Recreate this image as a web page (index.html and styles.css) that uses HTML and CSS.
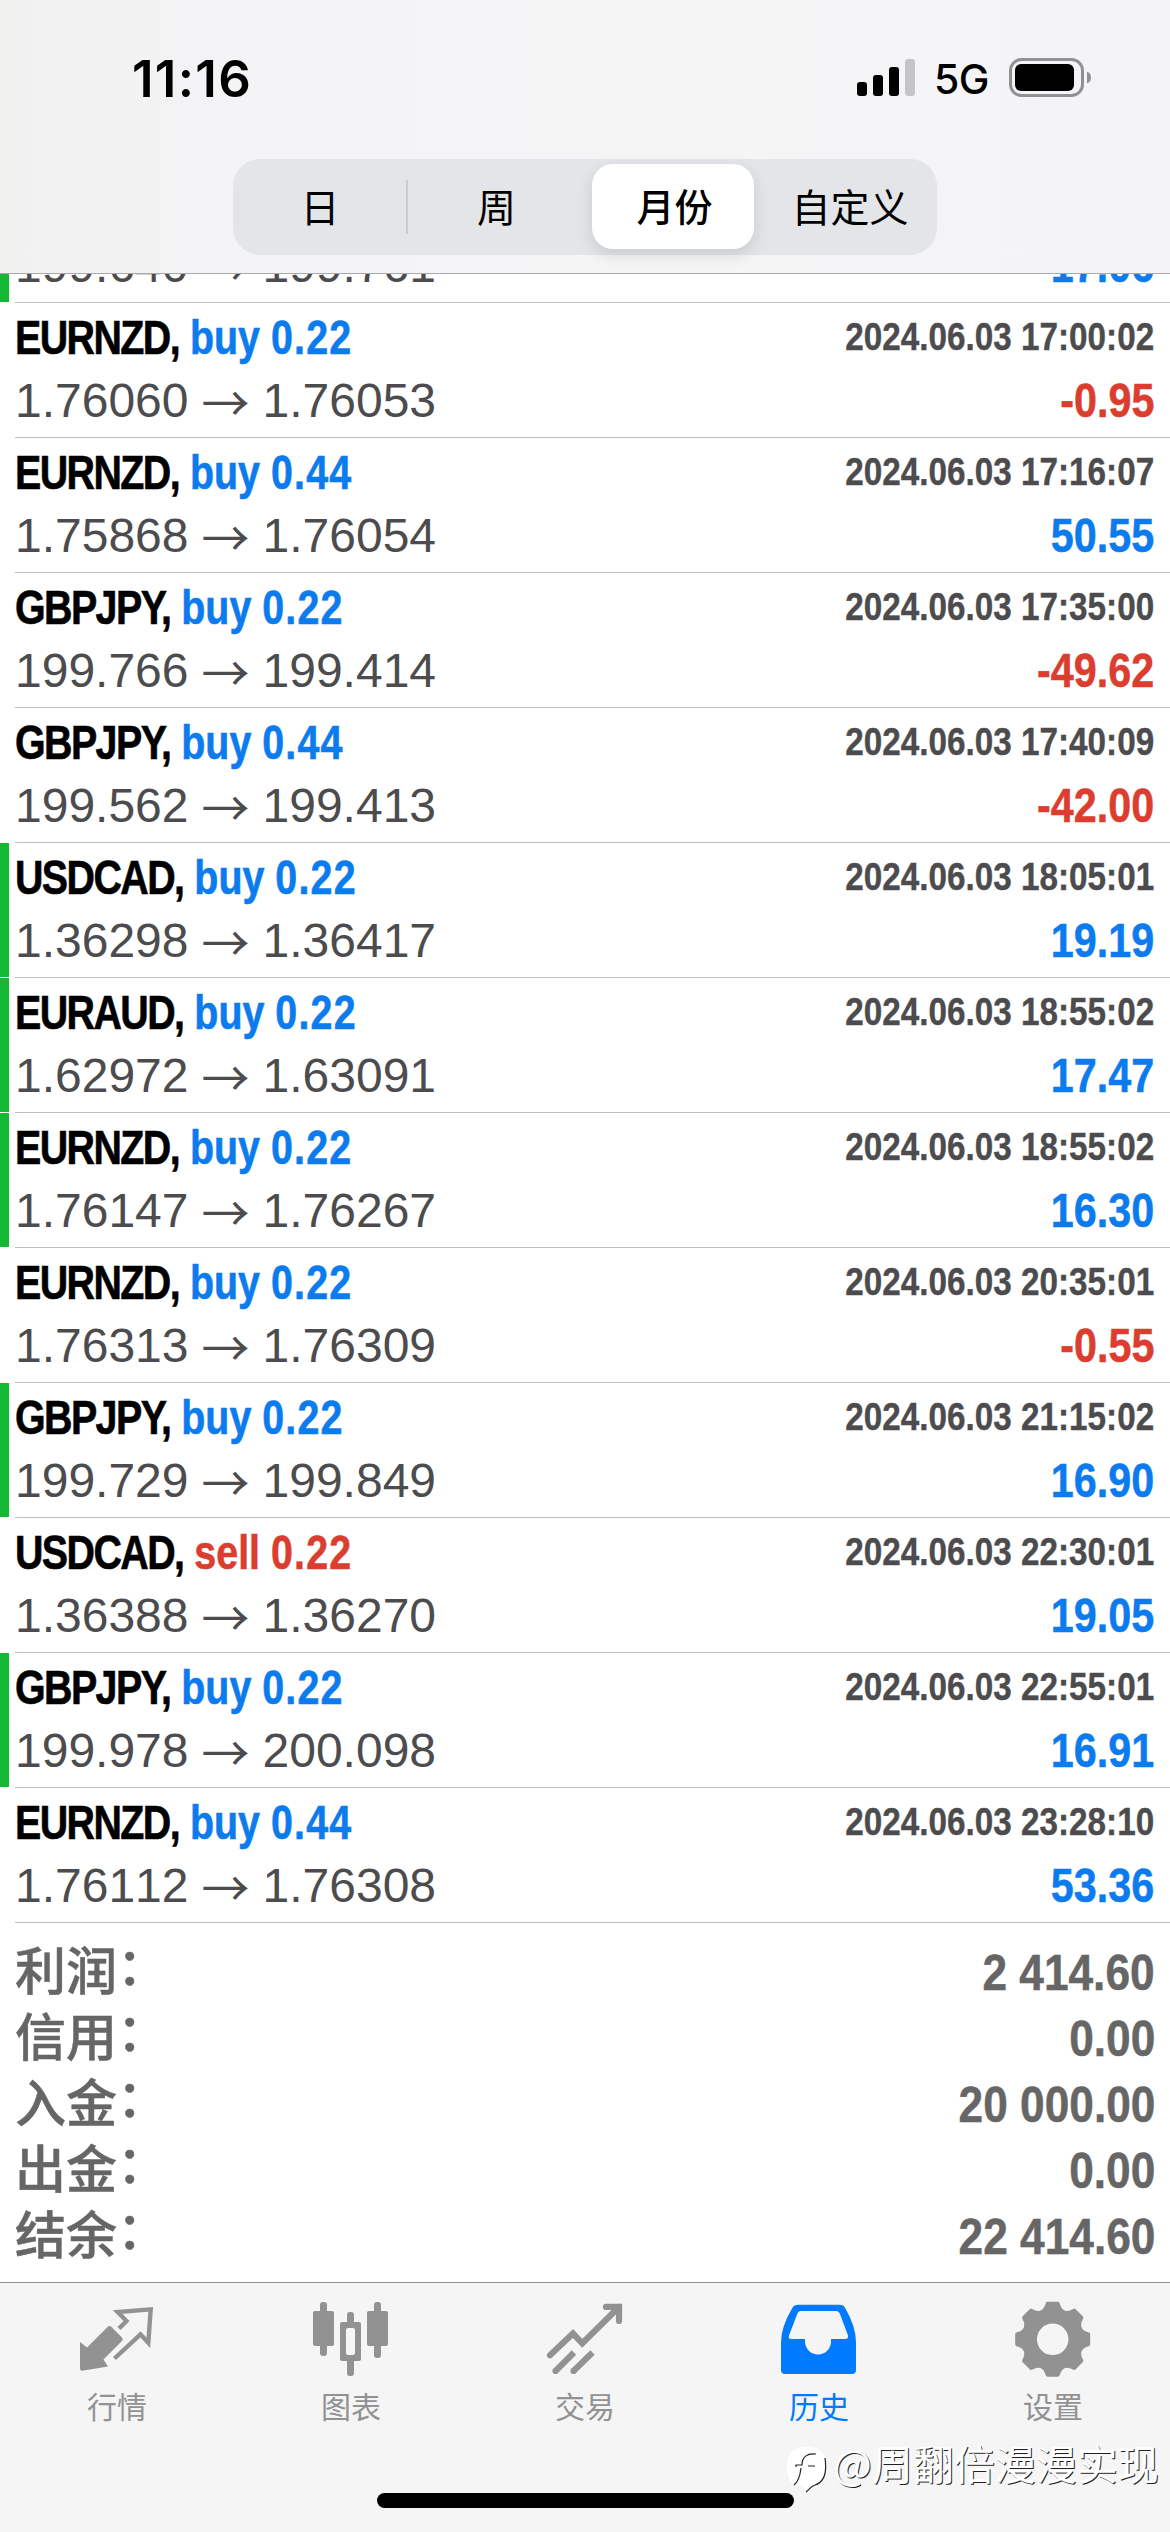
FILE: index.html
```html
<!DOCTYPE html>
<html lang="zh-CN">
<head>
<meta charset="utf-8">
<title>历史</title>
<link rel="stylesheet" href="styles.css">
</head>
<body>
<div class="app">
  <header class="header">
    <div class="status">
      <span class="time">11:16</span>
      <div class="status-right">
        <svg class="signal" width="58" height="38" viewBox="0 0 58 38"><rect x="0" y="23" width="10" height="14" rx="3"/><rect x="16" y="16" width="10" height="21" rx="3"/><rect x="32" y="8" width="10" height="29" rx="3"/><rect x="48" y="0" width="10" height="37" rx="3" fill="#c5c5c7"/></svg>
        <span class="network">5G</span>
        <svg class="battery" width="82" height="40" viewBox="0 0 82 40"><rect x="1.5" y="1.5" width="72" height="36" rx="11" fill="none" stroke="#919193" stroke-width="3"/><rect x="6" y="6" width="59" height="27" rx="6"/><path d="M78 13.5q4 1.500 4 6t-4 6z" fill="#919193"/></svg>
      </div>
    </div>
    <nav class="segmented">
      <span class="segment segment-day">日</span>
      <span class="segment segment-week">周</span>
      <span class="segment segment-active">月份</span>
      <span class="segment segment-custom">自定义</span>
    </nav>
  </header>

  <main class="content">
    <section class="deals">
      <article class="deal deal-tp deal-scrolled"><div class="line line-price"><div class="prices"><span>199.640</span><span class="arrow">→</span><span>199.761</span></div><div class="profit pos">17.06</div></div></article>
      <article class="deal"><div class="line"><div class="title"><span class="symbol">EURNZD,</span> <span class="buy">buy <span class="num">0.22</span></span></div><time class="date">2024.06.03 17:00:02</time></div><div class="line line-price"><div class="prices"><span>1.76060</span><span class="arrow">→</span><span>1.76053</span></div><div class="profit neg">-0.95</div></div></article>
      <article class="deal"><div class="line"><div class="title"><span class="symbol">EURNZD,</span> <span class="buy">buy <span class="num">0.44</span></span></div><time class="date">2024.06.03 17:16:07</time></div><div class="line line-price"><div class="prices"><span>1.75868</span><span class="arrow">→</span><span>1.76054</span></div><div class="profit pos">50.55</div></div></article>
      <article class="deal"><div class="line"><div class="title"><span class="symbol">GBPJPY,</span> <span class="buy">buy <span class="num">0.22</span></span></div><time class="date">2024.06.03 17:35:00</time></div><div class="line line-price"><div class="prices"><span>199.766</span><span class="arrow">→</span><span>199.414</span></div><div class="profit neg">-49.62</div></div></article>
      <article class="deal"><div class="line"><div class="title"><span class="symbol">GBPJPY,</span> <span class="buy">buy <span class="num">0.44</span></span></div><time class="date">2024.06.03 17:40:09</time></div><div class="line line-price"><div class="prices"><span>199.562</span><span class="arrow">→</span><span>199.413</span></div><div class="profit neg">-42.00</div></div></article>
      <article class="deal deal-tp"><div class="line"><div class="title"><span class="symbol">USDCAD,</span> <span class="buy">buy <span class="num">0.22</span></span></div><time class="date">2024.06.03 18:05:01</time></div><div class="line line-price"><div class="prices"><span>1.36298</span><span class="arrow">→</span><span>1.36417</span></div><div class="profit pos">19.19</div></div></article>
      <article class="deal deal-tp"><div class="line"><div class="title"><span class="symbol">EURAUD,</span> <span class="buy">buy <span class="num">0.22</span></span></div><time class="date">2024.06.03 18:55:02</time></div><div class="line line-price"><div class="prices"><span>1.62972</span><span class="arrow">→</span><span>1.63091</span></div><div class="profit pos">17.47</div></div></article>
      <article class="deal deal-tp"><div class="line"><div class="title"><span class="symbol">EURNZD,</span> <span class="buy">buy <span class="num">0.22</span></span></div><time class="date">2024.06.03 18:55:02</time></div><div class="line line-price"><div class="prices"><span>1.76147</span><span class="arrow">→</span><span>1.76267</span></div><div class="profit pos">16.30</div></div></article>
      <article class="deal"><div class="line"><div class="title"><span class="symbol">EURNZD,</span> <span class="buy">buy <span class="num">0.22</span></span></div><time class="date">2024.06.03 20:35:01</time></div><div class="line line-price"><div class="prices"><span>1.76313</span><span class="arrow">→</span><span>1.76309</span></div><div class="profit neg">-0.55</div></div></article>
      <article class="deal deal-tp"><div class="line"><div class="title"><span class="symbol">GBPJPY,</span> <span class="buy">buy <span class="num">0.22</span></span></div><time class="date">2024.06.03 21:15:02</time></div><div class="line line-price"><div class="prices"><span>199.729</span><span class="arrow">→</span><span>199.849</span></div><div class="profit pos">16.90</div></div></article>
      <article class="deal"><div class="line"><div class="title"><span class="symbol">USDCAD,</span> <span class="sell">sell <span class="num">0.22</span></span></div><time class="date">2024.06.03 22:30:01</time></div><div class="line line-price"><div class="prices"><span>1.36388</span><span class="arrow">→</span><span>1.36270</span></div><div class="profit pos">19.05</div></div></article>
      <article class="deal deal-tp"><div class="line"><div class="title"><span class="symbol">GBPJPY,</span> <span class="buy">buy <span class="num">0.22</span></span></div><time class="date">2024.06.03 22:55:01</time></div><div class="line line-price"><div class="prices"><span>199.978</span><span class="arrow">→</span><span>200.098</span></div><div class="profit pos">16.91</div></div></article>
      <article class="deal"><div class="line"><div class="title"><span class="symbol">EURNZD,</span> <span class="buy">buy <span class="num">0.44</span></span></div><time class="date">2024.06.03 23:28:10</time></div><div class="line line-price"><div class="prices"><span>1.76112</span><span class="arrow">→</span><span>1.76308</span></div><div class="profit pos">53.36</div></div></article>
    </section>
    <dl class="summary">
      <div class="total"><dt>利润<span class="colon">：</span></dt><dd>2 414.60</dd></div>
      <div class="total"><dt>信用<span class="colon">：</span></dt><dd>0.00</dd></div>
      <div class="total"><dt>入金<span class="colon">：</span></dt><dd>20 000.00</dd></div>
      <div class="total"><dt>出金<span class="colon">：</span></dt><dd>0.00</dd></div>
      <div class="total"><dt>结余<span class="colon">：</span></dt><dd>22 414.60</dd></div>
    </dl>
  </main>

  <footer class="tabbar">
    <nav class="tabs">
      <a class="tab">
        <svg class="icon" viewBox="0 0 78 78"><path d="M2 42l7 5.500L29.500 27q2-2 4 0l10.200 10.200q2 2 0 4L25.500 59.500l4.500 7L4 70.700q-2 0-2-2z" fill="currentColor"/><path d="M41 28.500l7.500-7.500-8.800-9 33-2.600-2.400 33.400-7.800-8.500L36.500 58.500" fill="none" stroke="currentColor" stroke-width="4.400"/></svg>
        <span>行情</span>
      </a>
      <a class="tab">
        <svg class="icon" viewBox="0 0 78 78" fill="currentColor"><rect x="8" y="2" width="7" height="54" rx="3"/><rect x="1" y="11" width="21" height="35" rx="2"/><rect x="62" y="2" width="7" height="56" rx="3"/><rect x="55" y="11" width="21" height="35" rx="2"/><rect x="35" y="12" width="7" height="64" rx="3"/><rect x="28" y="22" width="21" height="39" rx="2"/><rect x="34" y="28" width="9" height="27" rx="2" fill="#f6f6f6"/></svg>
        <span>图表</span>
      </a>
      <a class="tab">
        <svg class="icon" viewBox="0 0 78 78" fill="none" stroke="currentColor" stroke-width="6.200"><path d="M4 55.300L27 33.500l9.300 9.800L73 7" stroke-linecap="round"/><path d="M60 6.900h13v14" stroke-linecap="round"/><path d="M9.500 71L28 52.500M27.500 71L46.500 52.500"/><g fill="currentColor" stroke="none"><circle cx="9.500" cy="71" r="3.100"/><circle cx="27.500" cy="71" r="3.100"/></g></svg>
        <span>交易</span>
      </a>
      <a class="tab tab-active">
        <svg class="icon" viewBox="0 0 78 78"><path fill-rule="evenodd" fill="currentColor" d="M18 4.700h41.500q4 0 5.700 3.300Q76 27 76 42v28q0 4-4 4H5q-4 0-4-4V42Q1 27 12.300 8 14 4.700 18 4.700zM21 11q-2.500 0-3.500 2.300L9 35.500Q8 39 11 39h14v2.500a13 13 0 0 0 26 0V39h14q3.500 0 3-3.500l-8.300-22.200Q58.500 11 56 11z"/></svg>
        <span>历史</span>
      </a>
      <a class="tab">
        <svg class="icon" viewBox="0 0 78 78"><defs><path id="tooth" d="M-5-35.500H5Q7-28 13-26H-13Q-7-28-5-35.500z" stroke-width="4" stroke-linejoin="round"/></defs><g transform="translate(38.700 39.300)" fill="currentColor" stroke="currentColor"><circle r="23" fill="none" stroke-width="14.500"/><use href="#tooth"/><use href="#tooth" transform="rotate(45)"/><use href="#tooth" transform="rotate(90)"/><use href="#tooth" transform="rotate(135)"/><use href="#tooth" transform="rotate(180)"/><use href="#tooth" transform="rotate(225)"/><use href="#tooth" transform="rotate(270)"/><use href="#tooth" transform="rotate(315)"/></g></svg>
        <span>设置</span>
      </a>
    </nav>
    <div class="home-indicator"></div>
  </footer>

  <div class="watermark">
    <svg class="mark" width="42" height="48" viewBox="0 0 42 48"><path d="M20 1C34 1 40 6 40 21S35 39 27 39L20 46 16 40C5 39 1 33 1 21S6 1 20 1z" fill="#fff"/><path d="M39 12c2 14 0 24-10 27-4 1-5 4-9 7M8 39c4-3 6-8 7-17M10 21v-2h6c0-8 5-12 14-11M22 20h7" fill="none" stroke="#222" stroke-width="1.200"/></svg>
    <span>@周翻倍漫漫实现</span>
  </div>
</div>
</body>
</html>
```
FILE: styles.css
```css
* { box-sizing: border-box; }

body {
  margin: 0;
  background: #fff;
  font-family: "Liberation Sans", "Noto Sans CJK SC", sans-serif;
}

.app {
  position: relative;
  width: 1170px;
  height: 2532px;
  display: flex;
  flex-direction: column;
  overflow: hidden;
}

/* Header */
.header {
  height: 274px;
  flex: none;
  border-bottom: 1px solid #a9a9ab;
  background: linear-gradient(90deg, #f1f1f0 0, #f4f4f7 260px, #f5f5f6 700px, #f4f4f8 100%);
}

.status {
  height: 159px;
  padding: 47px 79px 0 132px;
  display: flex;
  justify-content: space-between;
  align-items: flex-start;
  font-family: Inter, sans-serif;
}

.time {
  font-size: 51px;
  font-weight: 600;
  line-height: 63px;
  letter-spacing: 1.3px;
}

.status-right {
  display: flex;
  align-items: center;
  height: 62px;
}

.network {
  font-size: 41px;
  font-weight: 500;
  line-height: 62px;
  margin: 2px 20px 0 19px;
  letter-spacing: -0.5px;
}

.segmented {
  width: 704px;
  height: 96px;
  margin: 0 auto;
  padding: 5px;
  display: grid;
  grid-template-columns: 170px 184px 162px 1fr;
  background: #e4e5e8;
  border-radius: 27px;
}

.segment {
  position: relative;
  font-family: "Noto Sans CJK SC", sans-serif;
  font-size: 39px;
  line-height: 82px;
  height: 85px;
  text-align: center;
}

.segment-day { padding-right: 6px; }
.segment-week { padding-right: 7px; }
.segment-custom { padding-left: 14px; }

.segment-day::after {
  content: "";
  position: absolute;
  right: 0;
  top: 16px;
  width: 2px;
  height: 54px;
  background: #cbcbce;
}

.segment-active {
  font-weight: 500;
  font-size: 38px;
  padding-left: 3px;
  background: #fff;
  border-radius: 21px;
  box-shadow: 0 6px 16px rgba(0, 0, 0, 0.12);
}

/* Deals */
.content {
  flex: 1;
  overflow: hidden;
}

.deal {
  position: relative;
  height: 135px;
  padding: 3px 16px 0 15px;
}

.deal::after {
  content: "";
  position: absolute;
  left: 15px;
  right: 0;
  bottom: 0;
  height: 1px;
  background: #bfbfc1;
}

/* Row partly scrolled under the header */
.deal-scrolled {
  display: flex;
  flex-direction: column;
  justify-content: flex-end;
  height: 29px;
  padding-top: 0;
  padding-bottom: 6px;
}

.deal-scrolled .line { flex: none; }

.deal-tp::before {
  content: "";
  position: absolute;
  left: 0;
  top: 0;
  bottom: 1px;
  width: 9px;
  background: #14b833;
}

.line {
  display: flex;
  justify-content: space-between;
  height: 64px;
  white-space: nowrap;
}

.line-price { height: 62px; }

.title {
  font-size: 48px;
  font-weight: 700;
  line-height: 64px;
  transform: scaleX(0.82);
  transform-origin: left;
  -webkit-text-stroke: 0.6px currentColor;
}

.symbol { letter-spacing: -1.9px; }
.buy { color: #0b7bee; }
.sell { color: #db3d2f; }
.num { letter-spacing: 1.5px; }

.date {
  font-size: 39px;
  font-weight: 700;
  line-height: 61px;
  color: #4c4c4e;
  transform: scaleX(0.853);
  transform-origin: right;
  -webkit-text-stroke: 0.4px currentColor;
}

.prices {
  display: flex;
  gap: 13px;
  font-size: 48px;
  line-height: 62px;
  color: #4c4c4e;
  font-kerning: none;
}

.arrow {
  font-family: "Noto Sans CJK SC", sans-serif;
  line-height: 60px;
}

.profit {
  font-size: 48px;
  font-weight: 700;
  line-height: 62px;
  transform: scaleX(0.86);
  transform-origin: right;
  -webkit-text-stroke: 0.5px currentColor;
}

.pos { color: #0b7bee; }
.neg { color: #db3d2f; }

/* Totals */
.summary {
  margin: 0;
  padding: 15px 15px 0 15px;
  color: #666;
}

.total {
  height: 66px;
  display: flex;
  justify-content: space-between;
  align-items: flex-start;
}

.total dt {
  font-family: "Noto Sans CJK SC", sans-serif;
  font-size: 51px;
  font-weight: 500;
  line-height: 61px;
  -webkit-text-stroke: 0.5px currentColor;
}

.colon {
  display: inline-block;
  line-height: 1;
  transform: translateY(-5px);
}

.total dd {
  margin: 0;
  font-size: 50px;
  font-weight: 700;
  line-height: 71px;
  transform: scaleX(0.885);
  transform-origin: right;
  -webkit-text-stroke: 0.5px currentColor;
}

/* Tab bar */
.tabbar {
  flex: none;
  height: 250px;
  border-top: 1px solid #8e8e90;
  background: #f5f5f5;
}

.tabs {
  height: 210px;
  display: grid;
  grid-template-columns: repeat(5, 1fr);
}

.tab {
  display: flex;
  flex-direction: column;
  align-items: center;
  padding-top: 17px;
  color: #929292;
  font-family: "Noto Sans CJK SC", sans-serif;
  font-size: 30px;
  line-height: 44px;
}

.tab span { margin-top: 5px; }
.tab-active { color: #007aff; }

.icon {
  width: 78px;
  height: 78px;
}

.home-indicator {
  width: 417px;
  height: 15px;
  margin: 0 auto;
  background: #000;
  border-radius: 8px;
}

.watermark {
  position: absolute;
  left: 786px;
  top: 2446px;
  display: flex;
  align-items: flex-start;
  gap: 5px;
  font-family: "Noto Sans CJK SC", sans-serif;
  font-size: 41px;
  line-height: 32px;
  color: #fff;
  text-shadow: 1px 1px 0 #222;
  white-space: nowrap;
}
```
